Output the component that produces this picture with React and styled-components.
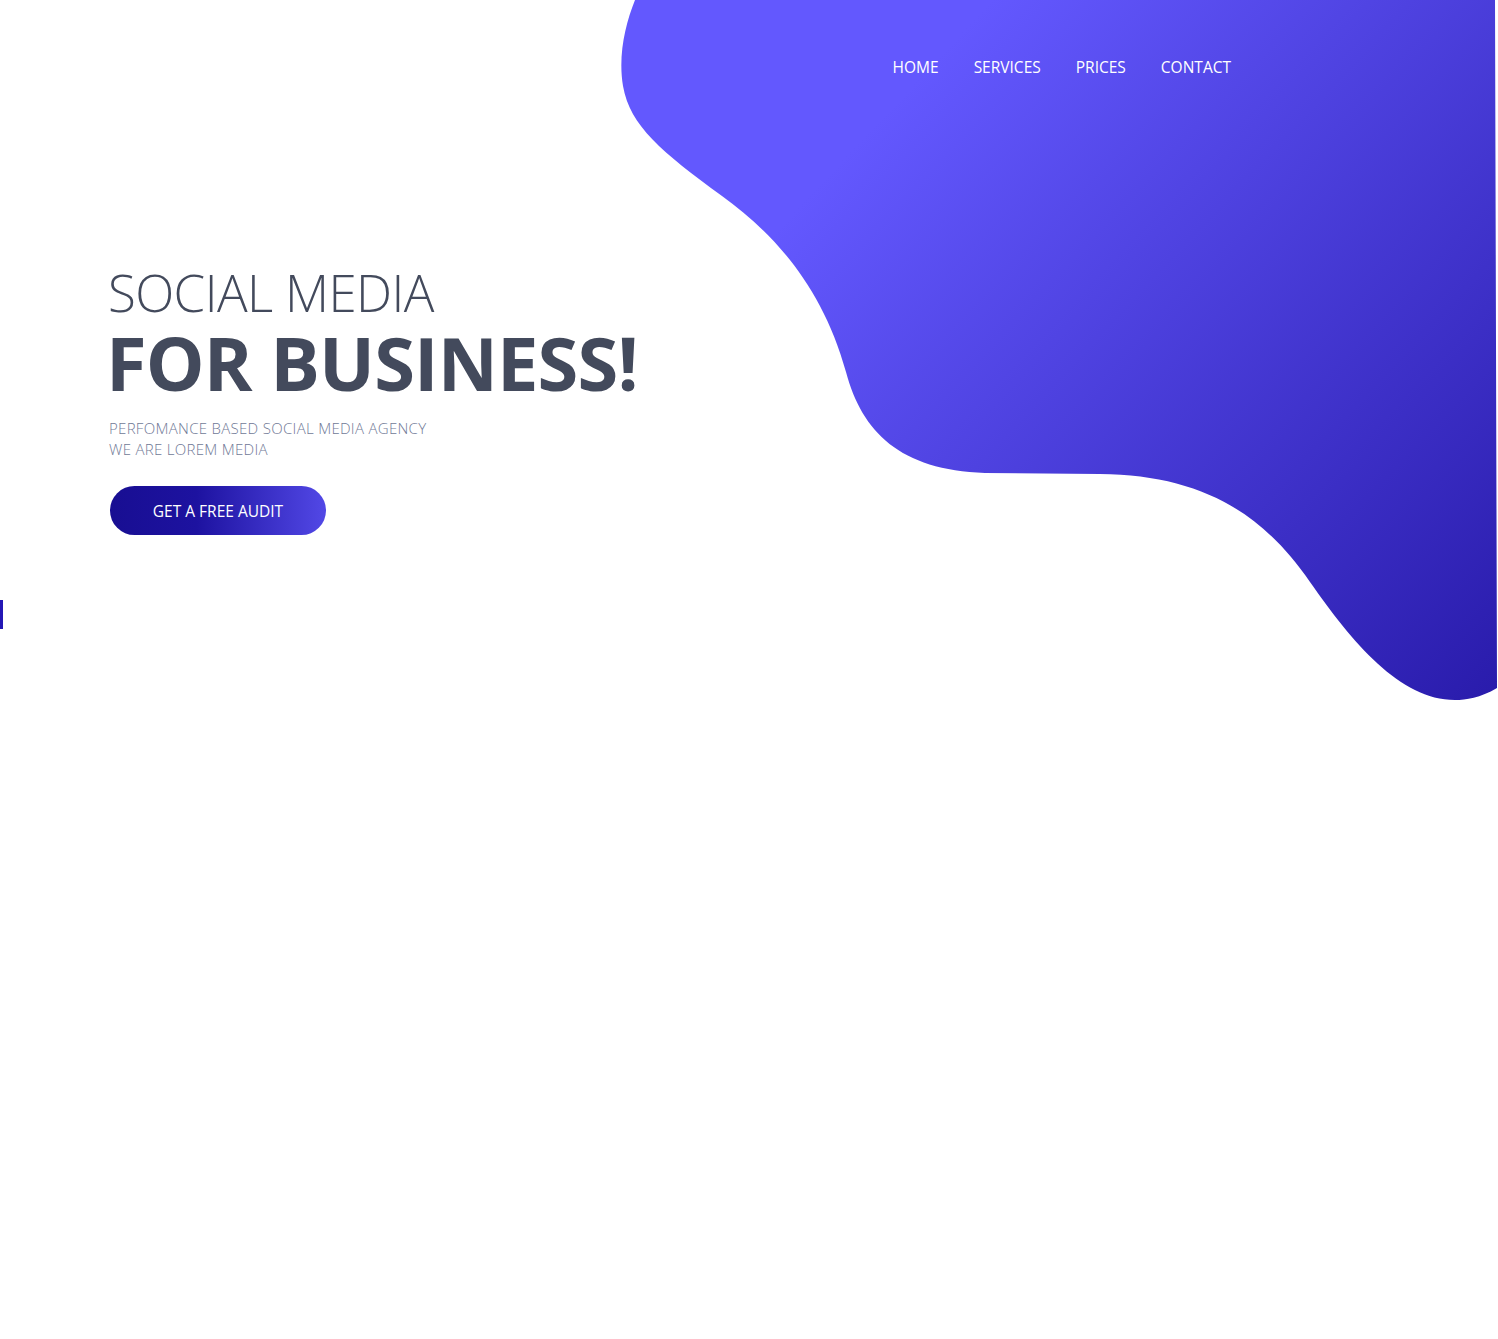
import React from "react";
import styled, { createGlobalStyle } from "styled-components";

const GlobalStyle = createGlobalStyle`
  * { box-sizing: border-box; }
  body {
    margin: 0;
    background: #fff;
    font-family: "Open Sans", "Noto Sans", sans-serif;
  }
`;

const Page = styled.div`
  position: relative;
  min-height: 1339px;
  overflow: hidden;
`;

const Blob = styled.svg`
  position: absolute;
  top: 0;
  left: 0;
  z-index: 0;
`;

const Header = styled.header`
  position: relative;
  z-index: 1;
  display: flex;
  justify-content: flex-end;
  padding: 56px 267px 0 0;
`;

const Nav = styled.nav`
  display: flex;
  gap: 35px;
`;

const NavLink = styled.a`
  color: #fff;
  font-size: 15.5px;
  line-height: 22px;
  text-decoration: none;
`;

const Hero = styled.section`
  position: relative;
  z-index: 1;
  padding: 184px 0 0 108px;
`;

const Title = styled.h1`
  margin: 0;
  color: #434a5c;
  font-weight: 300;
  font-size: 51px;
  line-height: 60px;
  letter-spacing: -0.6px;
`;

const Headline = styled.h2`
  margin: 0;
  color: #434a5c;
  font-weight: 700;
  font-size: 74px;
  line-height: 82px;
  letter-spacing: -0.85px;
  margin-left: -2px;
`;

const Tagline = styled.p`
  margin: 14px 0 0 1px;
  color: #707996;
  font-weight: 300;
  font-size: 15px;
  line-height: 21px;
  letter-spacing: 0.3px;
  text-transform: uppercase;
`;

const CtaButton = styled.button`
  margin: 26px 0 0 2px;
  width: 216px;
  height: 49px;
  border: 0;
  border-radius: 25px;
  background: linear-gradient(90deg, #180e92 0%, #1d12a0 40%, #5248e6 100%);
  color: #fff;
  font-family: inherit;
  font-size: 15.5px;
  cursor: pointer;
`;

const SideMark = styled.span`
  display: block;
  margin-top: 65px;
  width: 3px;
  height: 29px;
  background: #2417b5;
`;

const links = ["HOME", "SERVICES", "PRICES", "CONTACT"];

export default function App() {
  return (
    <Page>
      <GlobalStyle />
      <Blob width="1498" height="710" viewBox="0 0 1498 710">
        <defs>
          <linearGradient id="blobFill" gradientUnits="userSpaceOnUse" x1="880" y1="120" x2="1500" y2="700">
            <stop offset="0" stopColor="#6358fe" />
            <stop offset="1" stopColor="#291bab" />
          </linearGradient>
        </defs>
        <path
          fill="url(#blobFill)"
          d="M635 0 L1495 0 L1497 688 C1480 698 1466 700 1455 700 C1400 700 1352 642 1310 582 C1262 512 1200 475 1100 474 L985 473 C900 470 862 432 846 372 C822 285 772 232 722 196 C662 152 630 126 623 86 C618 56 625 25 635 0 Z"
        />
      </Blob>
      <Header>
        <Nav>
          {links.map((l) => (
            <NavLink key={l} href="#">
              {l}
            </NavLink>
          ))}
        </Nav>
      </Header>
      <Hero>
        <Title>SOCIAL MEDIA</Title>
        <Headline>FOR BUSINESS!</Headline>
        <Tagline>
          Perfomance based social media agency
          <br />
          We are lorem media
        </Tagline>
        <CtaButton>GET A FREE AUDIT</CtaButton>
      </Hero>
      <SideMark />
    </Page>
  );
}
